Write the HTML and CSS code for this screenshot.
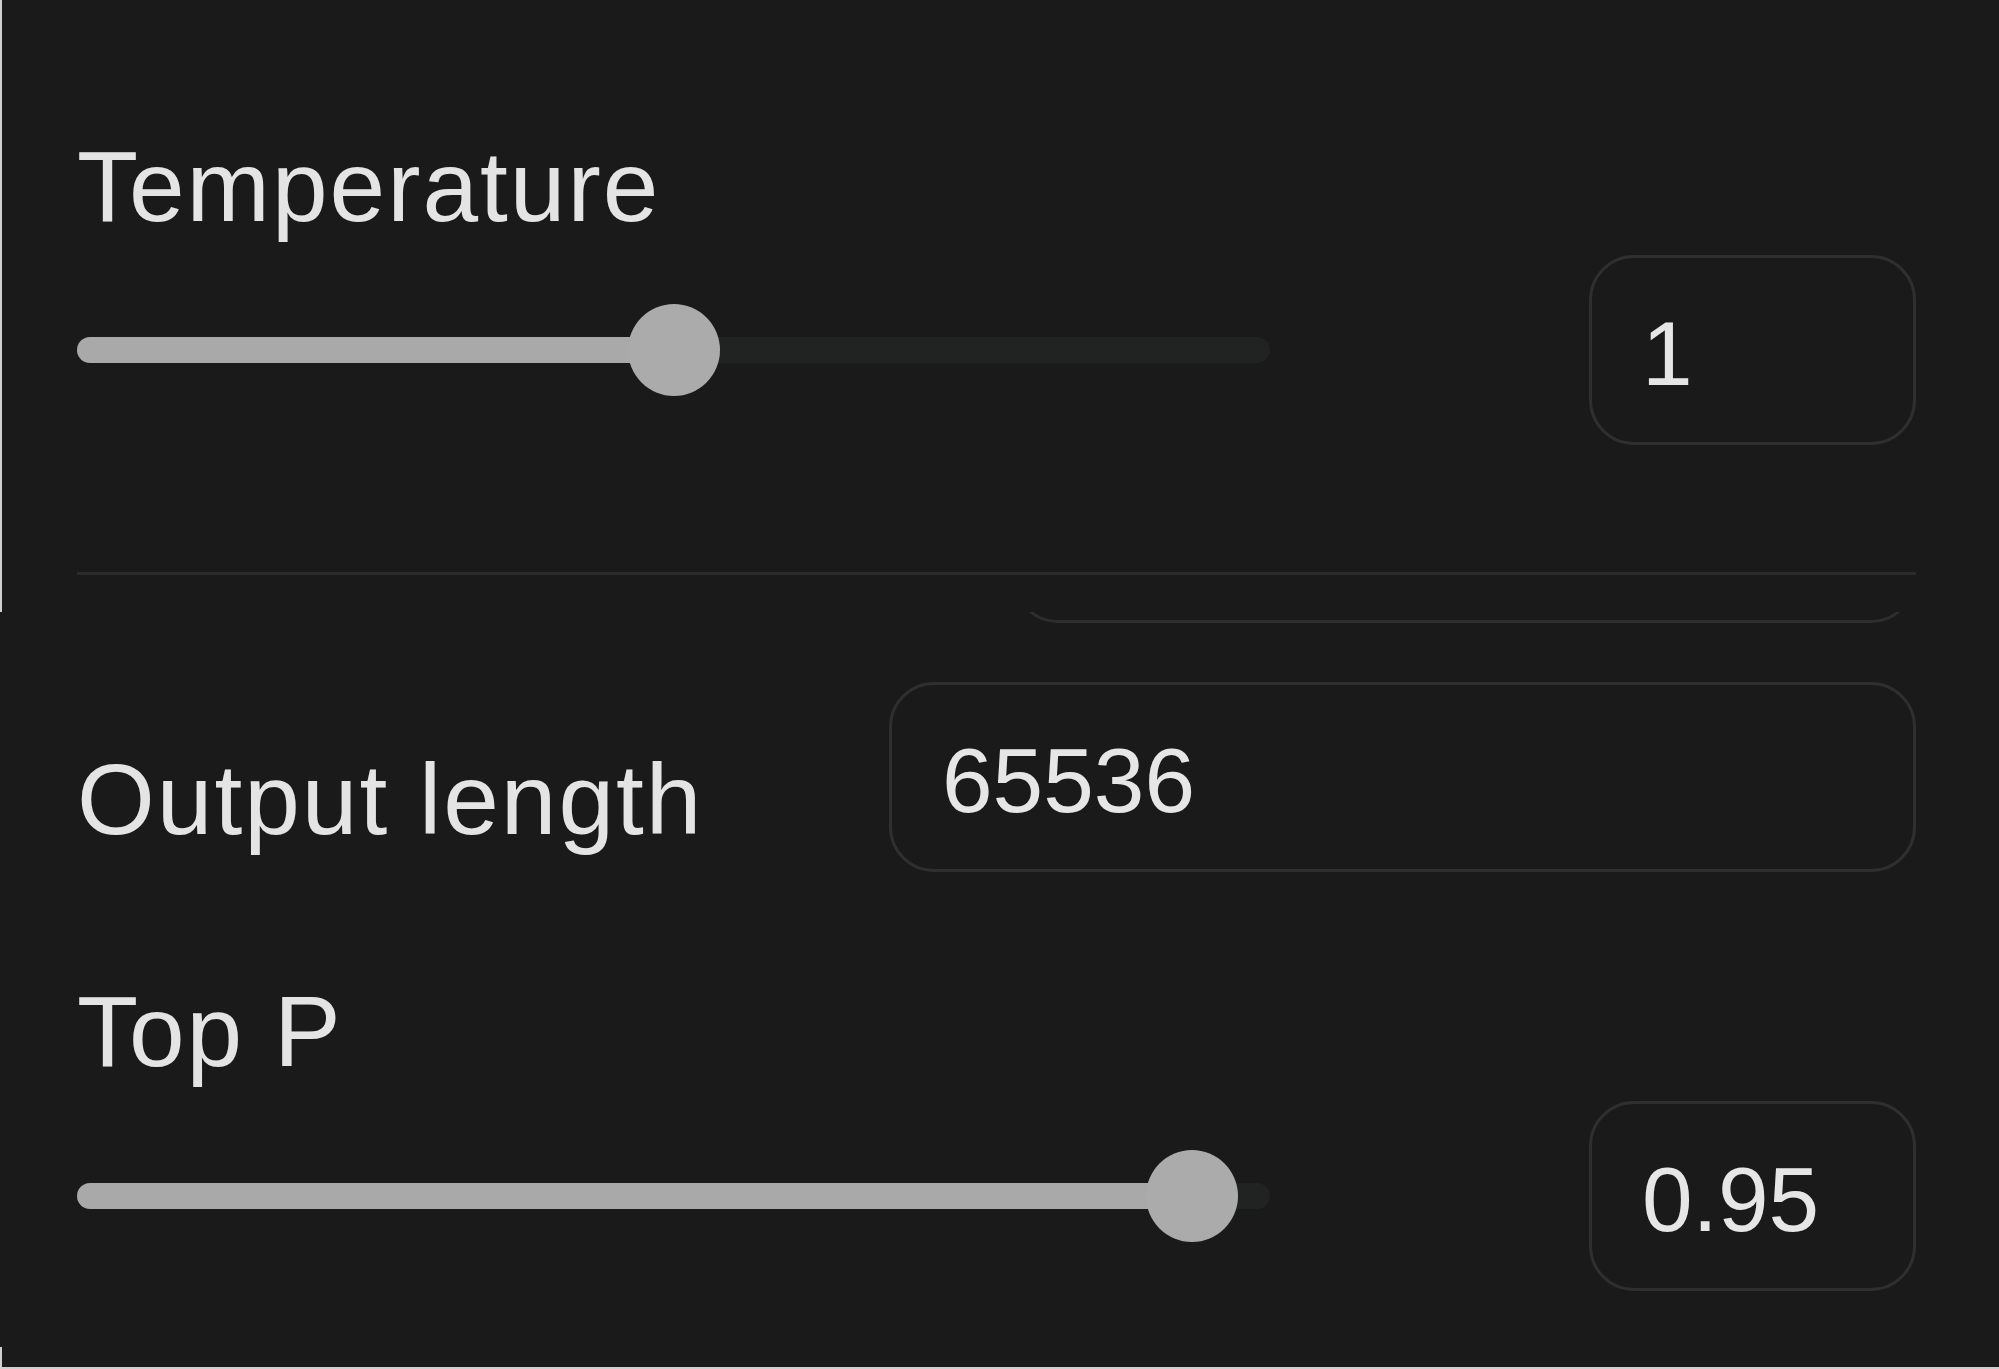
FILE: index.html
```html
<!DOCTYPE html>
<html lang="en">
<head>
<meta charset="utf-8">
<title>Run settings</title>
<link rel="stylesheet" href="styles.css">
</head>
<body>
<div class="page">
  <section class="piece piece-top">
    <div class="panel">
      <div class="field">
        <div class="label">Temperature</div>
        <div class="slider-row">
          <div class="slider">
            <div class="fill" style="width: 50%"></div>
            <div class="thumb" style="left: 50%"></div>
          </div>
          <div class="value-box">1</div>
        </div>
      </div>
      <div class="separator"></div>
    </div>
  </section>
  <section class="piece piece-mid">
    <div class="panel">
      <div class="stub"><div class="stub-box"></div></div>
      <div class="inline-row">
        <div class="label label-inline">Output length</div>
        <div class="text-box">65536</div>
      </div>
      <div class="field field-topp">
        <div class="label">Top P</div>
        <div class="slider-row slider-row-topp">
          <div class="slider">
            <div class="fill" style="width: 93.5%"></div>
            <div class="thumb" style="left: 93.5%"></div>
          </div>
          <div class="value-box">0.95</div>
        </div>
      </div>
    </div>
  </section>
  <section class="piece piece-bottom"></section>
</div>
</body>
</html>
```

FILE: styles.css
```css
* {
  box-sizing: border-box;
}

html, body {
  margin: 0;
  padding: 0;
  background: #1a1a1a;
}

body {
  width: 1999px;
  height: 1369px;
  overflow: hidden;
  font-family: "Liberation Sans", Arial, sans-serif;
  color: #e4e4e4;
}

.page {
  display: flex;
  flex-direction: column;
  width: 1999px;
  height: 1369px;
}

.piece-top {
  height: 612px;
  border-left: 2px solid #cfcfcf;
}

.piece-mid {
  height: 735px;
}

.piece-bottom {
  height: 22px;
  border-left: 2px solid #cfcfcf;
  border-bottom: 2px solid #cfcfcf;
}

.panel {
  display: flex;
  flex-direction: column;
  padding-left: 77px;
  padding-right: 83px;
}

.piece-top .panel {
  padding-left: 75px;
  padding-top: 130px;
}

.label {
  font-size: 100px;
  letter-spacing: 2px;
  line-height: 112px;
  height: 112px;
  white-space: nowrap;
}

.slider-row {
  display: flex;
  align-items: center;
  justify-content: space-between;
  height: 190px;
  margin-top: 13px;
}

.slider-row-topp {
  margin-top: 14px;
}

.slider {
  position: relative;
  width: 1193px;
  height: 26px;
  border-radius: 13px;
  background: #212322;
}

.fill {
  height: 100%;
  border-radius: 13px;
  background: #a9a9a9;
}

.thumb {
  position: absolute;
  top: 50%;
  width: 92px;
  height: 92px;
  margin-left: -46px;
  margin-top: -46px;
  border-radius: 50%;
  background: #ababab;
}

.value-box {
  display: flex;
  align-items: center;
  width: 327px;
  height: 190px;
  padding-left: 50px;
  padding-top: 8px;
  border: 3px solid #2f2f2f;
  border-radius: 45px;
  font-size: 91px;
  color: #e6e6e6;
}

.separator {
  height: 3px;
  margin-top: 127px;
  background: #2b2b2b;
}

.stub {
  height: 11px;
  margin-left: 936px;
  overflow: hidden;
}

.stub-box {
  height: 100px;
  margin-top: -89px;
  border: 3px solid #2e2e2e;
  border-radius: 45px;
}

.inline-row {
  display: flex;
  align-items: flex-end;
  justify-content: space-between;
  height: 190px;
  margin-top: 59px;
}

.label-inline {
  margin-bottom: 17px;
}

.text-box {
  display: flex;
  align-items: center;
  width: 1027px;
  height: 190px;
  padding-left: 50px;
  padding-top: 8px;
  border: 3px solid #2f2f2f;
  border-radius: 45px;
  font-size: 91px;
  color: #e6e6e6;
}

.field-topp {
  margin-top: 103px;
}
```
